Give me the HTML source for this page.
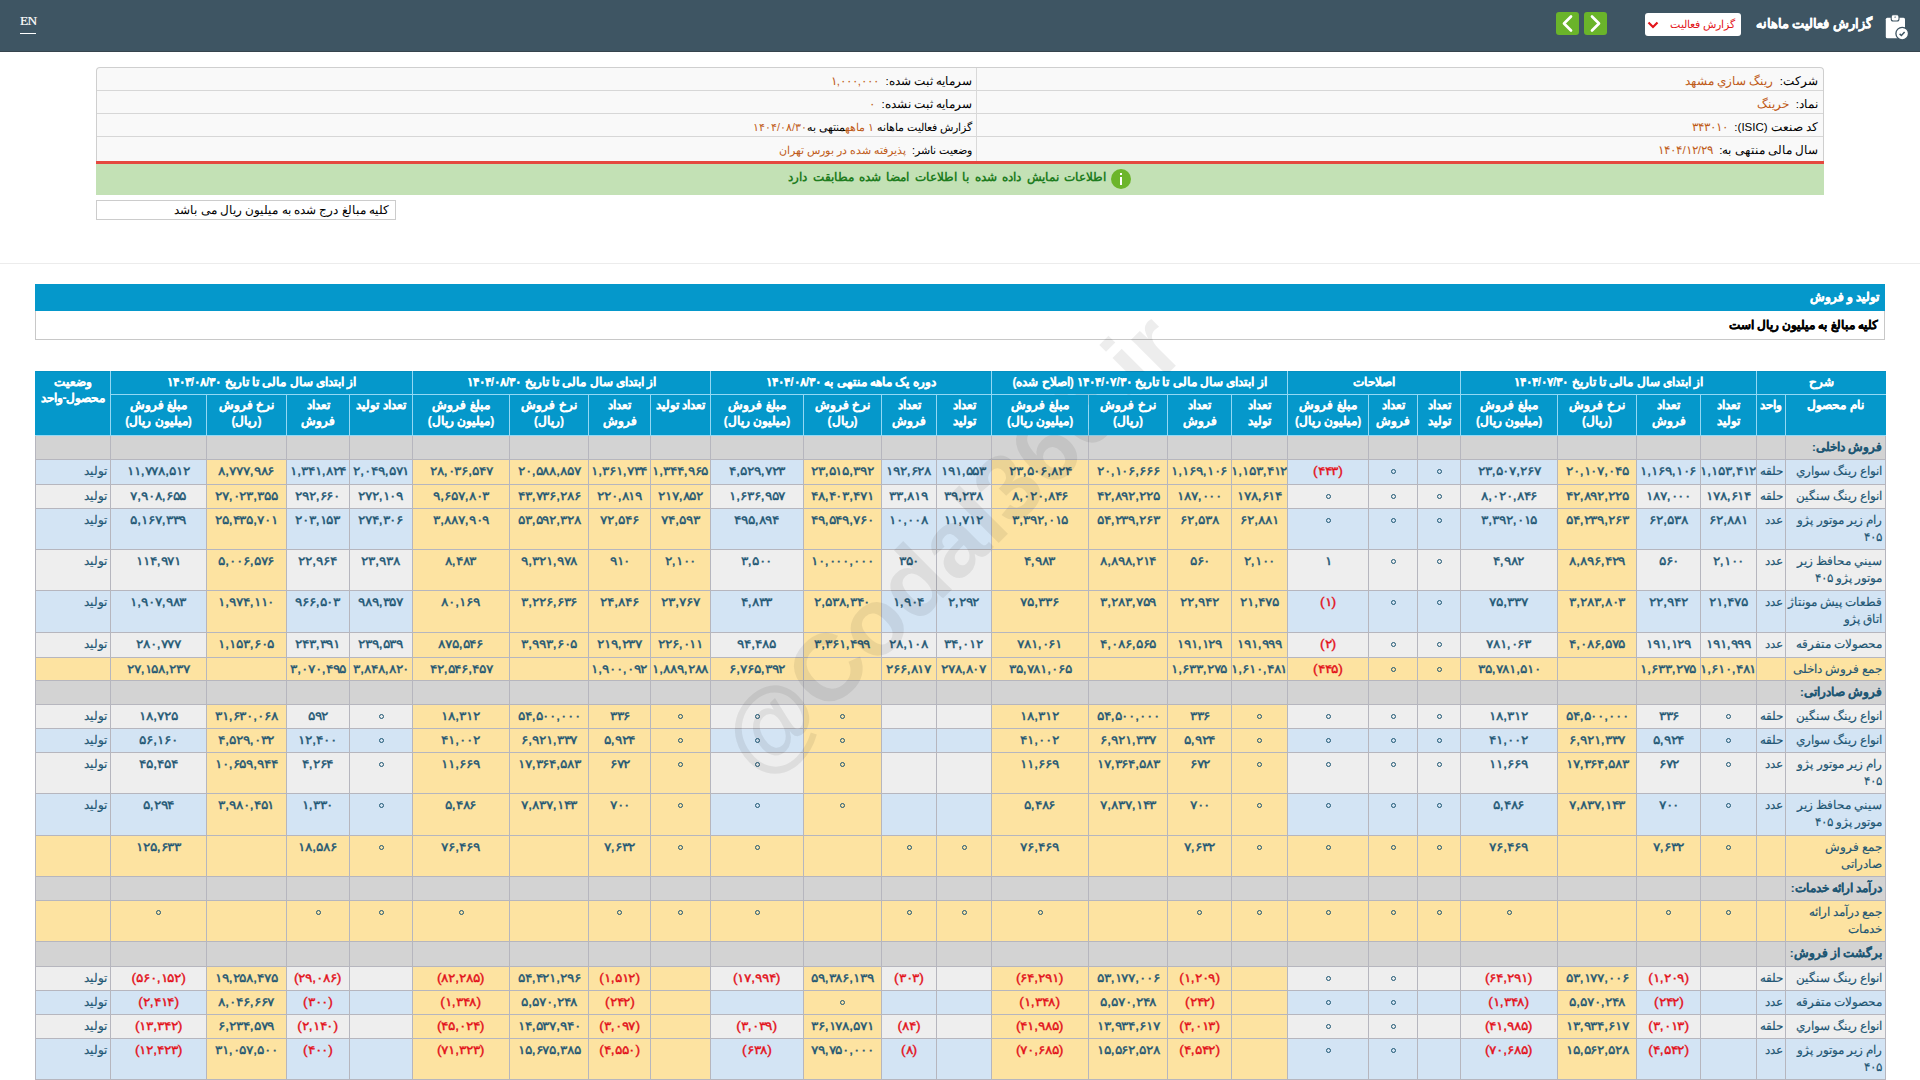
<!DOCTYPE html>
<html lang="fa" dir="rtl">
<head>
<meta charset="utf-8">
<title>گزارش فعالیت ماهانه</title>
<style>
*{box-sizing:border-box;margin:0;padding:0}
html,body{width:1920px;height:1080px;overflow:hidden;background:#fff}
body{font-family:"Liberation Sans",sans-serif;font-size:13px;color:#000;position:relative}
.top{position:absolute;left:0;top:0;width:1920px;height:52px;background:#3e5563;border-bottom:1px solid #36444d}
.en{position:absolute;left:20px;top:13px;font-family:"Liberation Serif",serif;font-size:13.4px;letter-spacing:-0.6px;-webkit-text-stroke:0.2px #fff;color:#fff;line-height:15px;direction:ltr}
.en:after{content:"";position:absolute;left:0;right:1px;top:20px;height:1px;background:#fff}
.ttl{position:absolute;right:48px;top:14px;color:#fff;font-weight:bold;font-size:13px;line-height:20px;white-space:nowrap;-webkit-text-stroke:0.3px #fff}
.clip{position:absolute;left:1884px;top:13px}
.sel{position:absolute;left:1645px;top:13px;width:96px;height:23px;background:#fff;border-radius:3px}
.sel span{position:absolute;right:6px;top:3px;color:#e3151a;font-size:11px;line-height:16px;white-space:nowrap}
.sel svg{position:absolute;left:2px;top:8px}
.gbtn{position:absolute;top:12px;width:23px;height:23px;background:#6ab42a;border-radius:3px}
.gbtn svg{position:absolute;left:0;top:0}

.info{position:absolute;left:96px;top:67px;width:1728px;height:94px;border:1px solid #cfcfcf;border-bottom:0;border-radius:4px 4px 0 0;background:#f9f9f9;overflow:hidden}
.info .row{position:absolute;left:0;width:1726px;height:23px;border-bottom:1px solid #d7d7d7}
.info .c{position:absolute;top:2px;height:23px;line-height:23px;white-space:nowrap;font-size:11.5px}
.info .cr{right:5px}
.info .cl{right:851px}
.info .vd{position:absolute;left:879px;top:0;width:1px;height:93px;background:#d9d9d9}
.v{color:#bf5b17}
.redl{position:absolute;left:96px;top:161px;width:1728px;height:3px;background:#e5483f}
.alert{position:absolute;left:96px;top:164px;width:1728px;height:31px;background:#c3e1b5}
.alert .t{position:absolute;right:718px;top:3px;color:#1f7d1f;font-weight:bold;font-size:12.3px;word-spacing:2px;line-height:20px;white-space:nowrap}
.alert .ic{position:absolute;left:1015px;top:5px;width:20px;height:20px;border-radius:50%;background:#6cb52b}
.alert .ic:before{content:"";position:absolute;left:9px;top:4px;width:2px;height:2px;background:#fff}
.alert .ic:after{content:"";position:absolute;left:9px;top:8px;width:2px;height:8px;background:#fff}
.note{position:absolute;left:96px;top:200px;width:300px;height:20px;border:1px solid #cccccc;background:#fff}
.note span{position:absolute;right:6px;top:1px;line-height:17px;font-size:12px;white-space:nowrap}
.hr{position:absolute;left:0;top:263px;width:1920px;height:1px;background:#ececec}

.sbar{position:absolute;left:35px;top:284px;width:1850px;height:27px;background:#0598cb}
.sbar span{position:absolute;right:6px;top:4px;color:#fff;font-weight:bold;font-size:11.6px;line-height:18px;-webkit-text-stroke:0.45px #fff}
.sbox{position:absolute;left:35px;top:311px;width:1850px;height:29px;border:1px solid #c8c8c8;border-top:0;background:#fff}
.sbox span{position:absolute;right:6px;top:5px;font-weight:bold;font-size:11.8px;line-height:18px;-webkit-text-stroke:0.3px #000}

table.m{position:absolute;left:35px;top:371px;width:1850px;table-layout:fixed;border-collapse:collapse;font-size:12px}
table.m th{position:relative;z-index:2;background:#0598cb;color:#fff;font-weight:bold;border:1px solid #93d8f4;text-align:center;vertical-align:top;line-height:16px;padding:2px 1px 0;font-size:12px;-webkit-text-stroke:0.2px #fff}
table.m tr.h0{height:23px}
table.m tr.h0 th{border-top-color:#0690c2}
table.m tr.h0 th.st{border-left-color:#0598cb}
table.m tr.h0 th:first-child, table.m tr.h1 th:first-child{border-right-color:#0598cb}
table.m tr.h1{height:41px}
table.m th.st{line-height:16px;padding-top:2px}
table.m td{border:1px solid #b6b6be;text-align:center;vertical-align:top;line-height:16px;padding:3px 1px 0;color:#1d5673;white-space:nowrap;overflow:hidden;-webkit-text-stroke:0.35px #1d5673;}
table.m td.nm{letter-spacing:0;text-align:right;white-space:nowrap;padding-right:3px;font-size:11.5px;line-height:16.5px;-webkit-text-stroke:0.15px #1d5673}
table.m td.un{letter-spacing:0;text-align:right;padding-right:2px;font-size:12px;-webkit-text-stroke:0.15px #1d5673;overflow:visible}
table.m td.st{letter-spacing:0;text-align:right;padding-right:3px;font-size:12px;-webkit-text-stroke:0.15px #1d5673}
table.m tr.sec td{background:#d3d3d3}
table.m tr.sec td.nm{font-weight:bold;color:#1d5673;font-size:11.5px}
table.m tr.rb td{background:#d3e4f4}
table.m tr.rw td{background:#eeeeee}
table.m tr td.y, table.m tr.tot td{background:#fde3a1}
table.m td i.z{display:inline-block;width:5px;height:5px;border:1.4px solid #1d5673;border-radius:50%;vertical-align:top;margin-top:5.5px}
table.m td b.n{font-weight:normal;display:inline-block;transform:scaleX(1.15)}
table.m td.neg{color:#e3101a;-webkit-text-stroke:0.35px #e3101a}
.wm{position:absolute;z-index:1;left:541px;top:494px;width:820px;text-align:center;font-size:95px;font-weight:bold;color:rgba(0,0,0,0.07);transform:rotate(-45deg);white-space:nowrap;direction:ltr;pointer-events:none;line-height:100px}
</style>
</head>
<body>
<div class="top">
  <div class="en">EN</div>
  <div class="ttl">گزارش فعالیت ماهانه</div>
  <svg class="clip" width="26" height="30" viewBox="0 0 26 30">
    <rect x="1.8" y="4.8" width="19.2" height="20.5" rx="1.5" fill="#fff"/>
    <rect x="7.2" y="1.8" width="7.8" height="6.2" rx="2" fill="#fff" stroke="#3e5563" stroke-width="1.1"/>
    <path d="M10.1 4.6 L11.1 3.2 L12.1 4.6 Z" fill="#3e5563"/>
    <circle cx="18.2" cy="20.6" r="6.3" fill="#fff" stroke="#3e5563" stroke-width="1.3"/>
    <path d="M15.6 20.9 L17.4 22.5 L20.6 19.1" fill="none" stroke="#3e5563" stroke-width="1.5"/>
  </svg>
  <div class="sel"><span>گزارش فعالیت</span>
    <svg width="12" height="8" viewBox="0 0 12 8"><path d="M1.5 1.5 L6 6 L10.5 1.5" fill="none" stroke="#e3151a" stroke-width="2.2"/></svg>
  </div>
  <div class="gbtn" style="left:1584px"><svg width="23" height="23" viewBox="0 0 23 23"><path d="M8 4.5 L15 11.5 L8 18.5" fill="none" stroke="#fff" stroke-width="2.7" stroke-linecap="round" stroke-linejoin="round"/></svg></div>
  <div class="gbtn" style="left:1556px"><svg width="23" height="23" viewBox="0 0 23 23"><path d="M15 4.5 L8 11.5 L15 18.5" fill="none" stroke="#fff" stroke-width="2.7" stroke-linecap="round" stroke-linejoin="round"/></svg></div>
</div>

<div class="info">
  <div class="row" style="top:0"><div class="c cr">شرکت:&nbsp; <span class="v">رينگ سازي مشهد</span></div><div class="c cl">سرمایه ثبت شده:&nbsp; <span class="v">۱,۰۰۰,۰۰۰</span></div></div>
  <div class="row" style="top:23px"><div class="c cr">نماد:&nbsp; <span class="v">خرینگ</span></div><div class="c cl">سرمایه ثبت نشده:&nbsp; <span class="v">۰</span></div></div>
  <div class="row" style="top:46px"><div class="c cr">کد صنعت (ISIC):&nbsp; <span class="v">۳۴۳۰۱۰</span></div><div class="c cl" style="font-size:10.8px">گزارش فعالیت ماهانه <span class="v">۱ ماهه</span>منتهی به<span class="v">۱۴۰۴/۰۸/۳۰</span></div></div>
  <div class="row" style="top:69px;border-bottom:0"><div class="c cr">سال مالی منتهی به:&nbsp; <span class="v">۱۴۰۴/۱۲/۲۹</span></div><div class="c cl" style="font-size:10.8px">وضعیت ناشر:&nbsp; <span class="v">پذیرفته شده در بورس تهران</span></div></div>
  <div class="vd"></div>
</div>
<div class="redl"></div>
<div class="alert"><div class="t">اطلاعات نمایش داده شده با اطلاعات امضا شده مطابقت دارد</div><div class="ic"></div></div>
<div class="note"><span>کلیه مبالغ درج شده به میلیون ریال می باشد</span></div>
<div class="hr"></div>

<div class="sbar"><span>تولید و فروش</span></div>
<div class="sbox"><span>کلیه مبالغ به میلیون ریال است</span></div>

<table class="m">
<colgroup><col style="width:100px"><col style="width:29px"><col style="width:56px"><col style="width:64px"><col style="width:79px"><col style="width:97px"><col style="width:43px"><col style="width:49px"><col style="width:81px"><col style="width:56px"><col style="width:64px"><col style="width:79px"><col style="width:97px"><col style="width:55px"><col style="width:55px"><col style="width:78px"><col style="width:93px"><col style="width:60px"><col style="width:62px"><col style="width:79px"><col style="width:97px"><col style="width:63px"><col style="width:63px"><col style="width:80px"><col style="width:96px"><col style="width:75px"></colgroup>
<thead><tr class="h0"><th colspan="2">شرح</th><th colspan="4">از ابتدای سال مالی تا تاریخ ۱۴۰۴/۰۷/۳۰</th><th colspan="3">اصلاحات</th><th colspan="4">از ابتدای سال مالی تا تاریخ ۱۴۰۴/۰۷/۳۰ (اصلاح شده)</th><th colspan="4">دوره یک ماهه منتهی به ۱۴۰۴/۰۸/۳۰</th><th colspan="4">از ابتدای سال مالی تا تاریخ ۱۴۰۴/۰۸/۳۰</th><th colspan="4">از ابتدای سال مالی تا تاریخ ۱۴۰۳/۰۸/۳۰</th><th rowspan="2" class="st">وضعیت<br>محصول-واحد</th></tr><tr class="h1"><th>نام محصول</th><th>واحد</th><th>تعداد<br>تولید</th><th>تعداد<br>فروش</th><th>نرخ فروش<br>(ریال)</th><th>مبلغ فروش<br>(میلیون ریال)</th><th>تعداد<br>تولید</th><th>تعداد<br>فروش</th><th>مبلغ فروش<br>(میلیون ریال)</th><th>تعداد<br>تولید</th><th>تعداد<br>فروش</th><th>نرخ فروش<br>(ریال)</th><th>مبلغ فروش<br>(میلیون ریال)</th><th>تعداد<br>تولید</th><th>تعداد<br>فروش</th><th>نرخ فروش<br>(ریال)</th><th>مبلغ فروش<br>(میلیون ریال)</th><th>تعداد تولید</th><th>تعداد<br>فروش</th><th>نرخ فروش<br>(ریال)</th><th>مبلغ فروش<br>(میلیون ریال)</th><th>تعداد تولید</th><th>تعداد<br>فروش</th><th>نرخ فروش<br>(ریال)</th><th>مبلغ فروش<br>(میلیون ریال)</th></tr></thead><tbody>
<tr class="sec" style="height:24px"><td class="nm">فروش داخلی:</td><td class="un"></td><td></td><td></td><td></td><td></td><td></td><td></td><td></td><td></td><td></td><td></td><td></td><td></td><td></td><td></td><td></td><td></td><td></td><td></td><td></td><td></td><td></td><td></td><td></td><td class="st"></td></tr>
<tr class="rb" style="height:25px"><td class="nm">انواع رينگ سواري</td><td class="un">حلقه</td><td><b class="n">۱,۱۵۳,۴۱۲</b></td><td><b class="n">۱,۱۶۹,۱۰۶</b></td><td class="y"><b class="n">۲۰,۱۰۷,۰۴۵</b></td><td><b class="n">۲۳,۵۰۷,۲۶۷</b></td><td><i class="z"></i></td><td><i class="z"></i></td><td class="neg"><b class="n">(۴۴۳)</b></td><td class="y"><b class="n">۱,۱۵۳,۴۱۲</b></td><td class="y"><b class="n">۱,۱۶۹,۱۰۶</b></td><td class="y"><b class="n">۲۰,۱۰۶,۶۶۶</b></td><td class="y"><b class="n">۲۳,۵۰۶,۸۲۴</b></td><td><b class="n">۱۹۱,۵۵۳</b></td><td><b class="n">۱۹۲,۶۲۸</b></td><td class="y"><b class="n">۲۳,۵۱۵,۳۹۲</b></td><td><b class="n">۴,۵۲۹,۷۲۳</b></td><td class="y"><b class="n">۱,۳۴۴,۹۶۵</b></td><td class="y"><b class="n">۱,۳۶۱,۷۳۴</b></td><td class="y"><b class="n">۲۰,۵۸۸,۸۵۷</b></td><td class="y"><b class="n">۲۸,۰۳۶,۵۴۷</b></td><td><b class="n">۲,۰۴۹,۵۷۱</b></td><td><b class="n">۱,۳۴۱,۸۲۴</b></td><td class="y"><b class="n">۸,۷۷۷,۹۸۶</b></td><td><b class="n">۱۱,۷۷۸,۵۱۲</b></td><td class="st">تولید</td></tr>
<tr class="rw" style="height:24px"><td class="nm">انواع رينگ سنگين</td><td class="un">حلقه</td><td><b class="n">۱۷۸,۶۱۴</b></td><td><b class="n">۱۸۷,۰۰۰</b></td><td class="y"><b class="n">۴۲,۸۹۲,۲۲۵</b></td><td><b class="n">۸,۰۲۰,۸۴۶</b></td><td><i class="z"></i></td><td><i class="z"></i></td><td><i class="z"></i></td><td class="y"><b class="n">۱۷۸,۶۱۴</b></td><td class="y"><b class="n">۱۸۷,۰۰۰</b></td><td class="y"><b class="n">۴۲,۸۹۲,۲۲۵</b></td><td class="y"><b class="n">۸,۰۲۰,۸۴۶</b></td><td><b class="n">۳۹,۲۳۸</b></td><td><b class="n">۳۳,۸۱۹</b></td><td class="y"><b class="n">۴۸,۴۰۳,۴۷۱</b></td><td><b class="n">۱,۶۳۶,۹۵۷</b></td><td class="y"><b class="n">۲۱۷,۸۵۲</b></td><td class="y"><b class="n">۲۲۰,۸۱۹</b></td><td class="y"><b class="n">۴۳,۷۳۶,۲۸۶</b></td><td class="y"><b class="n">۹,۶۵۷,۸۰۳</b></td><td><b class="n">۲۷۲,۱۰۹</b></td><td><b class="n">۲۹۲,۶۶۰</b></td><td class="y"><b class="n">۲۷,۰۲۳,۳۵۵</b></td><td><b class="n">۷,۹۰۸,۶۵۵</b></td><td class="st">تولید</td></tr>
<tr class="rb" style="height:41px"><td class="nm">رام زير موتور پژو<br>۴۰۵</td><td class="un">عدد</td><td><b class="n">۶۲,۸۸۱</b></td><td><b class="n">۶۲,۵۳۸</b></td><td class="y"><b class="n">۵۴,۲۳۹,۲۶۳</b></td><td><b class="n">۳,۳۹۲,۰۱۵</b></td><td><i class="z"></i></td><td><i class="z"></i></td><td><i class="z"></i></td><td class="y"><b class="n">۶۲,۸۸۱</b></td><td class="y"><b class="n">۶۲,۵۳۸</b></td><td class="y"><b class="n">۵۴,۲۳۹,۲۶۳</b></td><td class="y"><b class="n">۳,۳۹۲,۰۱۵</b></td><td><b class="n">۱۱,۷۱۲</b></td><td><b class="n">۱۰,۰۰۸</b></td><td class="y"><b class="n">۴۹,۵۴۹,۷۶۰</b></td><td><b class="n">۴۹۵,۸۹۴</b></td><td class="y"><b class="n">۷۴,۵۹۳</b></td><td class="y"><b class="n">۷۲,۵۴۶</b></td><td class="y"><b class="n">۵۳,۵۹۲,۳۲۸</b></td><td class="y"><b class="n">۳,۸۸۷,۹۰۹</b></td><td><b class="n">۲۷۴,۳۰۶</b></td><td><b class="n">۲۰۳,۱۵۳</b></td><td class="y"><b class="n">۲۵,۴۳۵,۷۰۱</b></td><td><b class="n">۵,۱۶۷,۳۳۹</b></td><td class="st">تولید</td></tr>
<tr class="rw" style="height:41px"><td class="nm">سيني محافظ زير<br>موتور پژو ۴۰۵</td><td class="un">عدد</td><td><b class="n">۲,۱۰۰</b></td><td><b class="n">۵۶۰</b></td><td class="y"><b class="n">۸,۸۹۶,۴۲۹</b></td><td><b class="n">۴,۹۸۲</b></td><td><i class="z"></i></td><td><i class="z"></i></td><td><b class="n">۱</b></td><td class="y"><b class="n">۲,۱۰۰</b></td><td class="y"><b class="n">۵۶۰</b></td><td class="y"><b class="n">۸,۸۹۸,۲۱۴</b></td><td class="y"><b class="n">۴,۹۸۳</b></td><td></td><td><b class="n">۳۵۰</b></td><td class="y"><b class="n">۱۰,۰۰۰,۰۰۰</b></td><td><b class="n">۳,۵۰۰</b></td><td class="y"><b class="n">۲,۱۰۰</b></td><td class="y"><b class="n">۹۱۰</b></td><td class="y"><b class="n">۹,۳۲۱,۹۷۸</b></td><td class="y"><b class="n">۸,۴۸۳</b></td><td><b class="n">۲۳,۹۳۸</b></td><td><b class="n">۲۲,۹۶۴</b></td><td class="y"><b class="n">۵,۰۰۶,۵۷۶</b></td><td><b class="n">۱۱۴,۹۷۱</b></td><td class="st">تولید</td></tr>
<tr class="rb" style="height:42px"><td class="nm">قطعات پيش مونتاژ<br>اتاق پژو</td><td class="un">عدد</td><td><b class="n">۲۱,۴۷۵</b></td><td><b class="n">۲۲,۹۴۲</b></td><td class="y"><b class="n">۳,۲۸۳,۸۰۳</b></td><td><b class="n">۷۵,۳۳۷</b></td><td><i class="z"></i></td><td><i class="z"></i></td><td class="neg"><b class="n">(۱)</b></td><td class="y"><b class="n">۲۱,۴۷۵</b></td><td class="y"><b class="n">۲۲,۹۴۲</b></td><td class="y"><b class="n">۳,۲۸۳,۷۵۹</b></td><td class="y"><b class="n">۷۵,۳۳۶</b></td><td><b class="n">۲,۲۹۲</b></td><td><b class="n">۱,۹۰۴</b></td><td class="y"><b class="n">۲,۵۳۸,۳۴۰</b></td><td><b class="n">۴,۸۳۳</b></td><td class="y"><b class="n">۲۳,۷۶۷</b></td><td class="y"><b class="n">۲۴,۸۴۶</b></td><td class="y"><b class="n">۳,۲۲۶,۶۳۶</b></td><td class="y"><b class="n">۸۰,۱۶۹</b></td><td><b class="n">۹۸۹,۳۵۷</b></td><td><b class="n">۹۶۶,۵۰۳</b></td><td class="y"><b class="n">۱,۹۷۴,۱۱۰</b></td><td><b class="n">۱,۹۰۷,۹۸۳</b></td><td class="st">تولید</td></tr>
<tr class="rw" style="height:25px"><td class="nm">محصولات متفرقه</td><td class="un">عدد</td><td><b class="n">۱۹۱,۹۹۹</b></td><td><b class="n">۱۹۱,۱۲۹</b></td><td class="y"><b class="n">۴,۰۸۶,۵۷۵</b></td><td><b class="n">۷۸۱,۰۶۳</b></td><td><i class="z"></i></td><td><i class="z"></i></td><td class="neg"><b class="n">(۲)</b></td><td class="y"><b class="n">۱۹۱,۹۹۹</b></td><td class="y"><b class="n">۱۹۱,۱۲۹</b></td><td class="y"><b class="n">۴,۰۸۶,۵۶۵</b></td><td class="y"><b class="n">۷۸۱,۰۶۱</b></td><td><b class="n">۳۴,۰۱۲</b></td><td><b class="n">۲۸,۱۰۸</b></td><td class="y"><b class="n">۳,۳۶۱,۴۹۹</b></td><td><b class="n">۹۴,۴۸۵</b></td><td class="y"><b class="n">۲۲۶,۰۱۱</b></td><td class="y"><b class="n">۲۱۹,۲۳۷</b></td><td class="y"><b class="n">۳,۹۹۳,۶۰۵</b></td><td class="y"><b class="n">۸۷۵,۵۴۶</b></td><td><b class="n">۲۳۹,۵۳۹</b></td><td><b class="n">۲۴۳,۳۹۱</b></td><td class="y"><b class="n">۱,۱۵۳,۶۰۵</b></td><td><b class="n">۲۸۰,۷۷۷</b></td><td class="st">تولید</td></tr>
<tr class="tot" style="height:23px"><td class="nm">جمع فروش داخلی</td><td class="un"></td><td><b class="n">۱,۶۱۰,۴۸۱</b></td><td><b class="n">۱,۶۳۳,۲۷۵</b></td><td></td><td><b class="n">۳۵,۷۸۱,۵۱۰</b></td><td><i class="z"></i></td><td><i class="z"></i></td><td class="neg"><b class="n">(۴۴۵)</b></td><td><b class="n">۱,۶۱۰,۴۸۱</b></td><td><b class="n">۱,۶۳۳,۲۷۵</b></td><td></td><td><b class="n">۳۵,۷۸۱,۰۶۵</b></td><td><b class="n">۲۷۸,۸۰۷</b></td><td><b class="n">۲۶۶,۸۱۷</b></td><td></td><td><b class="n">۶,۷۶۵,۳۹۲</b></td><td><b class="n">۱,۸۸۹,۲۸۸</b></td><td><b class="n">۱,۹۰۰,۰۹۲</b></td><td></td><td><b class="n">۴۲,۵۴۶,۴۵۷</b></td><td><b class="n">۳,۸۴۸,۸۲۰</b></td><td><b class="n">۳,۰۷۰,۴۹۵</b></td><td></td><td><b class="n">۲۷,۱۵۸,۲۳۷</b></td><td class="st"></td></tr>
<tr class="sec" style="height:24px"><td class="nm">فروش صادراتی:</td><td class="un"></td><td></td><td></td><td></td><td></td><td></td><td></td><td></td><td></td><td></td><td></td><td></td><td></td><td></td><td></td><td></td><td></td><td></td><td></td><td></td><td></td><td></td><td></td><td></td><td class="st"></td></tr>
<tr class="rw" style="height:24px"><td class="nm">انواع رينگ سنگين</td><td class="un">حلقه</td><td><i class="z"></i></td><td><b class="n">۳۳۶</b></td><td class="y"><b class="n">۵۴,۵۰۰,۰۰۰</b></td><td><b class="n">۱۸,۳۱۲</b></td><td><i class="z"></i></td><td><i class="z"></i></td><td><i class="z"></i></td><td class="y"><i class="z"></i></td><td class="y"><b class="n">۳۳۶</b></td><td class="y"><b class="n">۵۴,۵۰۰,۰۰۰</b></td><td class="y"><b class="n">۱۸,۳۱۲</b></td><td></td><td></td><td class="y"><i class="z"></i></td><td><i class="z"></i></td><td class="y"><i class="z"></i></td><td class="y"><b class="n">۳۳۶</b></td><td class="y"><b class="n">۵۴,۵۰۰,۰۰۰</b></td><td class="y"><b class="n">۱۸,۳۱۲</b></td><td><i class="z"></i></td><td><b class="n">۵۹۲</b></td><td class="y"><b class="n">۳۱,۶۳۰,۰۶۸</b></td><td><b class="n">۱۸,۷۲۵</b></td><td class="st">تولید</td></tr>
<tr class="rb" style="height:24px"><td class="nm">انواع رينگ سواري</td><td class="un">حلقه</td><td><i class="z"></i></td><td><b class="n">۵,۹۲۴</b></td><td class="y"><b class="n">۶,۹۲۱,۳۳۷</b></td><td><b class="n">۴۱,۰۰۲</b></td><td><i class="z"></i></td><td><i class="z"></i></td><td><i class="z"></i></td><td class="y"><i class="z"></i></td><td class="y"><b class="n">۵,۹۲۴</b></td><td class="y"><b class="n">۶,۹۲۱,۳۳۷</b></td><td class="y"><b class="n">۴۱,۰۰۲</b></td><td></td><td></td><td class="y"><i class="z"></i></td><td><i class="z"></i></td><td class="y"><i class="z"></i></td><td class="y"><b class="n">۵,۹۲۴</b></td><td class="y"><b class="n">۶,۹۲۱,۳۳۷</b></td><td class="y"><b class="n">۴۱,۰۰۲</b></td><td><i class="z"></i></td><td><b class="n">۱۲,۴۰۰</b></td><td class="y"><b class="n">۴,۵۲۹,۰۳۲</b></td><td><b class="n">۵۶,۱۶۰</b></td><td class="st">تولید</td></tr>
<tr class="rw" style="height:41px"><td class="nm">رام زير موتور پژو<br>۴۰۵</td><td class="un">عدد</td><td><i class="z"></i></td><td><b class="n">۶۷۲</b></td><td class="y"><b class="n">۱۷,۳۶۴,۵۸۳</b></td><td><b class="n">۱۱,۶۶۹</b></td><td><i class="z"></i></td><td><i class="z"></i></td><td><i class="z"></i></td><td class="y"><i class="z"></i></td><td class="y"><b class="n">۶۷۲</b></td><td class="y"><b class="n">۱۷,۳۶۴,۵۸۳</b></td><td class="y"><b class="n">۱۱,۶۶۹</b></td><td></td><td></td><td class="y"><i class="z"></i></td><td><i class="z"></i></td><td class="y"><i class="z"></i></td><td class="y"><b class="n">۶۷۲</b></td><td class="y"><b class="n">۱۷,۳۶۴,۵۸۳</b></td><td class="y"><b class="n">۱۱,۶۶۹</b></td><td><i class="z"></i></td><td><b class="n">۴,۲۶۴</b></td><td class="y"><b class="n">۱۰,۶۵۹,۹۴۴</b></td><td><b class="n">۴۵,۴۵۴</b></td><td class="st">تولید</td></tr>
<tr class="rb" style="height:42px"><td class="nm">سيني محافظ زير<br>موتور پژو ۴۰۵</td><td class="un">عدد</td><td><i class="z"></i></td><td><b class="n">۷۰۰</b></td><td class="y"><b class="n">۷,۸۳۷,۱۴۳</b></td><td><b class="n">۵,۴۸۶</b></td><td><i class="z"></i></td><td><i class="z"></i></td><td><i class="z"></i></td><td class="y"><i class="z"></i></td><td class="y"><b class="n">۷۰۰</b></td><td class="y"><b class="n">۷,۸۳۷,۱۴۳</b></td><td class="y"><b class="n">۵,۴۸۶</b></td><td></td><td></td><td class="y"><i class="z"></i></td><td><i class="z"></i></td><td class="y"><i class="z"></i></td><td class="y"><b class="n">۷۰۰</b></td><td class="y"><b class="n">۷,۸۳۷,۱۴۳</b></td><td class="y"><b class="n">۵,۴۸۶</b></td><td><i class="z"></i></td><td><b class="n">۱,۳۳۰</b></td><td class="y"><b class="n">۳,۹۸۰,۴۵۱</b></td><td><b class="n">۵,۲۹۴</b></td><td class="st">تولید</td></tr>
<tr class="tot" style="height:41px"><td class="nm">جمع فروش<br>صادراتی</td><td class="un"></td><td><i class="z"></i></td><td><b class="n">۷,۶۳۲</b></td><td></td><td><b class="n">۷۶,۴۶۹</b></td><td><i class="z"></i></td><td><i class="z"></i></td><td><i class="z"></i></td><td><i class="z"></i></td><td><b class="n">۷,۶۳۲</b></td><td></td><td><b class="n">۷۶,۴۶۹</b></td><td><i class="z"></i></td><td><i class="z"></i></td><td></td><td><i class="z"></i></td><td><i class="z"></i></td><td><b class="n">۷,۶۳۲</b></td><td></td><td><b class="n">۷۶,۴۶۹</b></td><td><i class="z"></i></td><td><b class="n">۱۸,۵۸۶</b></td><td></td><td><b class="n">۱۲۵,۶۳۳</b></td><td class="st"></td></tr>
<tr class="sec" style="height:24px"><td class="nm">درآمد ارائه خدمات:</td><td class="un"></td><td></td><td></td><td></td><td></td><td></td><td></td><td></td><td></td><td></td><td></td><td></td><td></td><td></td><td></td><td></td><td></td><td></td><td></td><td></td><td></td><td></td><td></td><td></td><td class="st"></td></tr>
<tr class="tot" style="height:41px"><td class="nm">جمع درآمد ارائه<br>خدمات</td><td class="un"></td><td><i class="z"></i></td><td><i class="z"></i></td><td></td><td><i class="z"></i></td><td><i class="z"></i></td><td><i class="z"></i></td><td><i class="z"></i></td><td><i class="z"></i></td><td><i class="z"></i></td><td></td><td><i class="z"></i></td><td><i class="z"></i></td><td><i class="z"></i></td><td></td><td><i class="z"></i></td><td><i class="z"></i></td><td><i class="z"></i></td><td></td><td><i class="z"></i></td><td><i class="z"></i></td><td><i class="z"></i></td><td></td><td><i class="z"></i></td><td class="st"></td></tr>
<tr class="sec" style="height:25px"><td class="nm">برگشت از فروش:</td><td class="un"></td><td></td><td></td><td></td><td></td><td></td><td></td><td></td><td></td><td></td><td></td><td></td><td></td><td></td><td></td><td></td><td></td><td></td><td></td><td></td><td></td><td></td><td></td><td></td><td class="st"></td></tr>
<tr class="rw" style="height:24px"><td class="nm">انواع رينگ سنگين</td><td class="un">حلقه</td><td></td><td class="neg"><b class="n">(۱,۲۰۹)</b></td><td class="y"><b class="n">۵۳,۱۷۷,۰۰۶</b></td><td class="neg"><b class="n">(۶۴,۲۹۱)</b></td><td></td><td><i class="z"></i></td><td><i class="z"></i></td><td class="y"></td><td class="y neg"><b class="n">(۱,۲۰۹)</b></td><td class="y"><b class="n">۵۳,۱۷۷,۰۰۶</b></td><td class="y neg"><b class="n">(۶۴,۲۹۱)</b></td><td></td><td class="neg"><b class="n">(۳۰۳)</b></td><td class="y"><b class="n">۵۹,۳۸۶,۱۳۹</b></td><td class="neg"><b class="n">(۱۷,۹۹۴)</b></td><td class="y"></td><td class="y neg"><b class="n">(۱,۵۱۲)</b></td><td class="y"><b class="n">۵۴,۴۲۱,۲۹۶</b></td><td class="y neg"><b class="n">(۸۲,۲۸۵)</b></td><td></td><td class="neg"><b class="n">(۲۹,۰۸۶)</b></td><td class="y"><b class="n">۱۹,۲۵۸,۴۷۵</b></td><td class="neg"><b class="n">(۵۶۰,۱۵۲)</b></td><td class="st">تولید</td></tr>
<tr class="rb" style="height:24px"><td class="nm">محصولات متفرقه</td><td class="un">عدد</td><td></td><td class="neg"><b class="n">(۲۴۲)</b></td><td class="y"><b class="n">۵,۵۷۰,۲۴۸</b></td><td class="neg"><b class="n">(۱,۳۴۸)</b></td><td></td><td><i class="z"></i></td><td><i class="z"></i></td><td class="y"></td><td class="y neg"><b class="n">(۲۴۲)</b></td><td class="y"><b class="n">۵,۵۷۰,۲۴۸</b></td><td class="y neg"><b class="n">(۱,۳۴۸)</b></td><td></td><td></td><td class="y"><i class="z"></i></td><td></td><td class="y"></td><td class="y neg"><b class="n">(۲۴۲)</b></td><td class="y"><b class="n">۵,۵۷۰,۲۴۸</b></td><td class="y neg"><b class="n">(۱,۳۴۸)</b></td><td></td><td class="neg"><b class="n">(۳۰۰)</b></td><td class="y"><b class="n">۸,۰۴۶,۶۶۷</b></td><td class="neg"><b class="n">(۲,۴۱۴)</b></td><td class="st">تولید</td></tr>
<tr class="rw" style="height:24px"><td class="nm">انواع رينگ سواري</td><td class="un">حلقه</td><td></td><td class="neg"><b class="n">(۳,۰۱۳)</b></td><td class="y"><b class="n">۱۳,۹۳۴,۶۱۷</b></td><td class="neg"><b class="n">(۴۱,۹۸۵)</b></td><td></td><td><i class="z"></i></td><td><i class="z"></i></td><td class="y"></td><td class="y neg"><b class="n">(۳,۰۱۳)</b></td><td class="y"><b class="n">۱۳,۹۳۴,۶۱۷</b></td><td class="y neg"><b class="n">(۴۱,۹۸۵)</b></td><td></td><td class="neg"><b class="n">(۸۴)</b></td><td class="y"><b class="n">۳۶,۱۷۸,۵۷۱</b></td><td class="neg"><b class="n">(۳,۰۳۹)</b></td><td class="y"></td><td class="y neg"><b class="n">(۳,۰۹۷)</b></td><td class="y"><b class="n">۱۴,۵۳۷,۹۴۰</b></td><td class="y neg"><b class="n">(۴۵,۰۲۴)</b></td><td></td><td class="neg"><b class="n">(۲,۱۴۰)</b></td><td class="y"><b class="n">۶,۲۳۴,۵۷۹</b></td><td class="neg"><b class="n">(۱۳,۳۴۲)</b></td><td class="st">تولید</td></tr>
<tr class="rb" style="height:41px"><td class="nm">رام زير موتور پژو<br>۴۰۵</td><td class="un">عدد</td><td></td><td class="neg"><b class="n">(۴,۵۴۲)</b></td><td class="y"><b class="n">۱۵,۵۶۲,۵۲۸</b></td><td class="neg"><b class="n">(۷۰,۶۸۵)</b></td><td></td><td><i class="z"></i></td><td><i class="z"></i></td><td class="y"></td><td class="y neg"><b class="n">(۴,۵۴۲)</b></td><td class="y"><b class="n">۱۵,۵۶۲,۵۲۸</b></td><td class="y neg"><b class="n">(۷۰,۶۸۵)</b></td><td></td><td class="neg"><b class="n">(۸)</b></td><td class="y"><b class="n">۷۹,۷۵۰,۰۰۰</b></td><td class="neg"><b class="n">(۶۳۸)</b></td><td class="y"></td><td class="y neg"><b class="n">(۴,۵۵۰)</b></td><td class="y"><b class="n">۱۵,۶۷۵,۳۸۵</b></td><td class="y neg"><b class="n">(۷۱,۳۲۳)</b></td><td></td><td class="neg"><b class="n">(۴۰۰)</b></td><td class="y"><b class="n">۳۱,۰۵۷,۵۰۰</b></td><td class="neg"><b class="n">(۱۲,۴۲۳)</b></td><td class="st">تولید</td></tr>
</tbody>
</table>
<div class="wm">@Codal360.ir</div>
</body>
</html>
